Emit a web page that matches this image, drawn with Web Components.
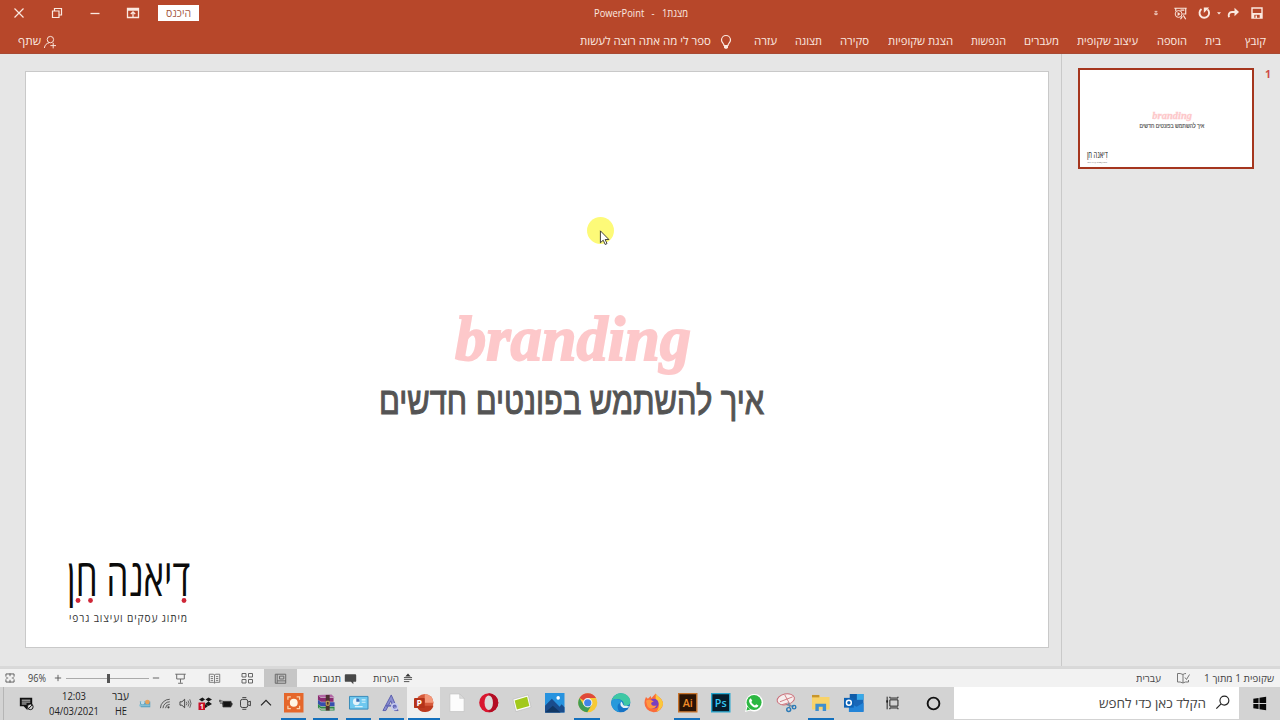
<!DOCTYPE html>
<html lang="he">
<head>
<meta charset="utf-8">
<title>מצגת1 - PowerPoint</title>
<style>
  body {
    margin: 0;
    width: 1280px;
    height: 720px;
    overflow: hidden;
    display: flex;
    flex-direction: column;
    background: #e6e6e6;
    font-family: "Open Sans", "Liberation Sans", sans-serif;
  }
</style>
</head>
<body>
<app-header></app-header>
<work-area></work-area>
<status-bar></status-bar>
<task-bar></task-bar>

<script>
const ICONS = {
  close: '<path d="M5.5 5.5l9 9M14.5 5.5l-9 9" stroke="currentColor" stroke-width="1.2"/>',
  restore: '<path d="M5.5 8h6.500v6.500h-6.500zM7.500 8v-2.500h7v6.500h-2.500" stroke="currentColor" stroke-width="1.2" fill="none"/>',
  minimize: '<path d="M5.500 10.500h9" stroke="currentColor" stroke-width="1.3"/>',
  ribbon: '<path d="M4.500 5.500h11v9h-11zM4.500 7h11M10 14V9M7.800 11l2.200-2.200 2.200 2.200" stroke="currentColor" stroke-width="1.3" fill="none"/>',
  caret: '<path d="M7.500 9h5L10 11.800z" fill="currentColor"/>',
  more: '<path d="M8.300 8h3.400M8.600 10h2.800v2h-2.800z" stroke="currentColor" fill="none"/>',
  save: '<path d="M5 5h10v10H5z" stroke="currentColor" stroke-width="1.4" fill="none"/><path d="M5 10h10v5H5z" fill="currentColor"/><path d="M7.300 11.800h5.400v3H7.300z" fill="#b7472a"/><path d="M8.500 12.500h1.500V15H8.500z" fill="currentColor"/>',
  redo: '<path d="M13 9H9c-2.600 0-4 2.200-3 5.200" stroke="currentColor" stroke-width="1.900" fill="none"/><path d="M11.500 4.800l4.500 4.200-4.500 4.200z" fill="currentColor"/>',
  undo: '<path d="M7.500 6.100a4.800 4.800 0 1 0 6 .3" stroke="currentColor" stroke-width="1.900" fill="none"/><path d="M15.200 4.600H9.800V10z" fill="currentColor"/>',
  present: '<path d="M3.500 4.500h13M5 4.500v3M15.500 4.500v6H12M12 13l-2 3M13 12l2.500 4M10 6.500h4" stroke="currentColor" stroke-width="1.200" fill="none"/><circle cx="8" cy="10.500" r="3.600" stroke="currentColor" fill="none"/><path d="M7 8.500v4l3-2z" fill="currentColor"/>',
  person: '<circle cx="10.500" cy="7" r="4" stroke="currentColor" stroke-width="1.200" fill="none"/><path d="M3 17.500c.5-4 3-6 6-6.500M14 11v7M10.500 14.500h7" stroke="currentColor" stroke-width="1.200" fill="none"/>',
  bulb: '<path d="M8 13.500c0-2-2.500-2.700-2.500-5.500a4.500 4.500 0 0 1 9 0c0 2.800-2.500 3.500-2.500 5.500z" stroke="currentColor" stroke-width="1.200" fill="none"/><path d="M8 13.500h4v2l-1 1.200H9l-1-1.200z" fill="currentColor"/>',
  fit: '<path d="M5.500 8.500v-3h9v3M5.500 11.500v3h9v-3M10 5v3M10 12v3M5.500 10H8M12 10h2.500" stroke="#555" fill="none"/>',
  plus: '<path d="M6.500 10h7M10 6.500v7" stroke="#555"/>',
  minus: '<path d="M6.500 10h7" stroke="#555"/>',
  show: '<path d="M4.500 5.500h11M6 5.500v5h8v-5M10 10.500v4M7.500 15h5" stroke="#666" fill="none"/>',
  read: '<path d="M4.500 5.500h4.500l1 1 1-1h4.500v8.500H11l-1 1-1-1H4.500zM10 6v9M6 8h2.500M6 10h2.500M6 12h2.500M11.500 8H14M11.500 10H14M11.500 12H14" stroke="#777" fill="none"/>',
  sorter: '<path d="M5 5.500h4v3.500H5zM11.500 5.500h4v3.500h-4zM5 11.500h4V15H5zM11.500 11.500h4V15h-4z" stroke="#666" fill="none"/>',
  normal: '<path d="M4.500 5.500h11v9.500h-11zM6.500 5.500v9.500M9 7.500h4.500v3H9zM6.500 12.500h9" stroke="#666" fill="none"/>',
  comment: '<path d="M5 5.500h10q1 0 1 1v6q0 1-1 1h-2V16l-2.500-2.500H5q-1 0-1-1v-6q0-1 1-1z" fill="#484848"/>',
  notes: '<path d="M10 5l3 3.200H7z" fill="#333"/><path d="M5.500 9.500h9M5.500 11.500h9M5.500 14h6" stroke="#444"/>',
  proof: '<path d="M10 6.500v8.500M10 6.500Q7 5 4.500 5.500v8.500Q7 13.500 10 15q2-1.500 5.500-1v-2M10 6.500q1-1 3-1M12 9.500l1.500 2 3-5" stroke="#777" fill="none"/>',
  notify: '<path d="M3 4h13v9h-5v4l-4-4H3z" fill="#111"/><path d="M5 6.500h9M5 8.500h9M5 10.500h5" stroke="#ddd"/><circle cx="14" cy="13.500" r="3" fill="#d3d3d3" stroke="#111"/><path d="M12 15.500l4-4" stroke="#111"/>',
  weather: '<path d="M4 8h11v6H5z" fill="#4f9bbd"/><circle cx="7" cy="9" r="2" fill="#c3dbe4"/><circle cx="12" cy="8.500" r="2.500" fill="#e5a25d"/><path d="M3.500 12h11" stroke="#85bed3" stroke-width="2"/>',
  wifi: '<path d="M4 15.500A11 11 0 0 1 15 5M7 15.500A8 8 0 0 1 15 8M10 15.500A5 5 0 0 1 15 11" stroke="#444" fill="none"/><circle cx="13.500" cy="14.500" r="1.300" fill="#444"/>',
  volume: '<path d="M3.500 8h2.300L9 5v10l-3.200-3H3.500z" stroke="#333" fill="none"/><path d="M11 8q1.300 2 0 4M13 6.500q2.300 3.500 0 7M15 5q3 5 0 10" stroke="#555" fill="none"/>',
  dropbox: '<path d="M4 6.500l3.500-2L10 6.500l-3 2zM10.500 6.500l3-2 3.500 2-3.500 2zM10 11l3.500-2.500L17 11l-3.500 2zM8 13l2.500-1.500L13 13l-2.500 2z" fill="#181818"/><path d="M3.500 9.500h6.500V17H3.500z" fill="#c90f25"/><text x="6.800" y="15.700" text-anchor="middle" font-family="Open Sans" font-size="6.500" font-weight="700" fill="#fff">1</text>',
  battery: '<path d="M7 7.500h9.500v6.500H7zM16.500 9.500h1.200v2.500h-1.200z" fill="#151515" stroke="#333"/><path d="M2.500 7h4M3.500 5.500v3M3.500 9.500h3l1 3" stroke="#333" fill="none"/>',
  camera: '<rect x="5" y="6" width="8" height="9" rx="2" stroke="#333" fill="none"/><path d="M13 9l3-1v5l-3-1M7 4h4.500M7 17h4.500" stroke="#333" fill="none"/>',
  up: '<path d="M5 12.300l5-5 5 5" stroke="#222" stroke-width="1.200" fill="none"/>',
  record: '<path d="M0 0h20v20H0z" fill="#e5672b"/><path d="M4 7V4h3M13 4h3v3M16 13v3h-3M7 16H4v-3" stroke="#fbd2ad" stroke-width="1.300" fill="none"/><circle cx="10" cy="10" r="4" fill="#fff6e4"/>',
  winrar: '<path d="M2 2l14-.5 3 3H5z" fill="#b267a5"/><path d="M2 2l3 3h13v4H5L2 7z" fill="#8b2a70"/><path d="M2 7l3 2.500h14v4H5L2 11z" fill="#364eae"/><path d="M2 11l3 3h14v4H5l-3-3z" fill="#2b8b48"/><path d="M3 15l2 1.500h13" stroke="#e9d9d7" fill="none"/><path d="M10 2h4v16h-4z" fill="#4d3030"/><path d="M10.500 8.500h3v4h-3z" stroke="#d6b45a" fill="none"/>',
  panel: '<path d="M.5 3.500h19v13H.500z" fill="#6fc8ef" stroke="#398bb9"/><circle cx="7.500" cy="9" r="3.500" fill="#e5f3fa"/><path d="M7.500 9V5.500A3.500 3.500 0 0 1 11 9z" fill="#3a6fb5"/><path d="M13 7h4M13 9.500h4M6 14h8" stroke="#d5f1fb" stroke-width="1.200"/>',
  fontapp: '<path d="M2 18L10.500 2l7 16h-3.500l-4-10-5 10z" fill="#8a8ed1" stroke="#5b60ae"/><path d="M5 13h11" stroke="#6469b7" stroke-width="2"/><circle cx="14" cy="14" r="3" stroke="#c5cbef" fill="none" stroke-width="1.600"/>',
  ppt: '<circle cx="11" cy="10" r="9" fill="#d65b3c"/><path d="M11 1a9 9 0 0 1 9 9h-9z" fill="#f4997b"/><path d="M2.500 13H20a9 9 0 0 1-17 1z" fill="#bd3b20"/><rect x="0" y="5" width="11" height="10.500" rx="1" fill="#b53319"/><text x="5.500" y="13.500" text-anchor="middle" font-family="Open Sans" font-size="9" font-weight="700" fill="#fff">P</text>',
  file: '<path d="M3 1h10l4.500 4.500V19H3z" fill="#fcfcfc" stroke="#c4c4c4" stroke-width=".700"/><path d="M13 1v4.500h4.500z" fill="#ddd" stroke="#bbb" stroke-width=".500"/>',
  opera: '<circle cx="10" cy="10" r="9.800" fill="#d9162f"/><path d="M10 .2a9.800 9.800 0 0 1 0 19.600z" fill="#b30d24"/><ellipse cx="10" cy="10" rx="4.300" ry="7.500" fill="#dadada"/>',
  card: '<path d="M1 6.500L16.500 2l3 12.500L4 19z" fill="#fff" stroke="#aaa" stroke-width=".500"/><path d="M2.700 7.800l12.800-4 2.300 9.500L5 17z" fill="#a2c91b"/>',
  photos: '<path d="M0 0h20v20H0z" fill="#2793df"/><path d="M0 13l7-7 8 8 2-2.500 3 3V20H0z" fill="#1a4c8c"/><path d="M0 20l8-7 8 7z" fill="#113764"/><circle cx="13.500" cy="5" r="1.800" fill="#fff"/>',
  chrome: '<circle cx="10" cy="10" r="9.800" fill="#f7c934"/><path d="M10 10L1.500 5.100A9.800 9.800 0 0 1 18.500 5.200H10z" fill="#df493b"/><path d="M1.500 5.100A9.800 9.800 0 0 0 9.500 19.800l4.500-7.500-8.200 0z" fill="#3f9d55"/><circle cx="10" cy="10" r="4.800" fill="#f4f4f4"/><circle cx="10" cy="10" r="3.700" fill="#4285e8"/>',
  edge: '<circle cx="10" cy="10" r="9.800" fill="#1573c6"/><path d="M.5 8C3 1 8 0 11 .300c5 .300 9 4.200 8.800 8.700-.200 3.500-3 5-7 3.500 2-5-7-9-12.300-4.500z" fill="#3fc8a4"/><path d="M.5 8c5-4.500 13-.5 11 4-3-4-7 1-3 7.500C2 18.500-.5 13 .500 8z" fill="#2799db"/><path d="M11 9c-3 2-.5 6.500 3 6.500 2 0 4-1 5-1.500l-3-1c-2 .5-4-.5-4-2z" fill="#e6f1f5"/>',
  firefox: '<path d="M2 4l2 2 3-3 .5 2.500L12 .5c1 3 7 4.500 7.500 10A9.500 9.500 0 0 1 .500 10C.500 8 1 6 2 4z" fill="#fa6c3b"/><path d="M12 .5c1 3 7 4.500 7.500 10-.3 4-3 7-6.500 8.500 4-5 2-10-1-12.500z" fill="#fbc83b"/><circle cx="10" cy="11" r="5" fill="#7a3fbf"/><path d="M2 8c3-2 6-1 8 1-2 0-3 1-2.500 2.500 1 2 4 2 5.500 1-1 3.500-7 5-9.500 1z" fill="#ff9640"/>',
  ai: '<path d="M.7.7h18.600v18.600H.7z" fill="#2a1304" stroke="#c8742c" stroke-width="1.400"/><text x="10" y="14" text-anchor="middle" font-family="Open Sans" font-size="11" font-weight="600" fill="#ee8b28">Ai</text>',
  ps: '<path d="M.7.7h18.600v18.600H.7z" fill="#061c2b" stroke="#27a7d0" stroke-width="1.400"/><text x="10" y="14" text-anchor="middle" font-family="Open Sans" font-size="11" font-weight="600" fill="#35c6f4">Ps</text>',
  whatsapp: '<path d="M1 19.500L2.500 14A9 9 0 1 1 6.500 18z" fill="#fff"/><circle cx="10.300" cy="9.800" r="7.700" fill="#2cb742"/><path d="M2.500 18l1-4 3 3z" fill="#2cb742"/><path d="M7 5.500l1.500 2.500-1 1.300c.8 1.700 2 2.700 3.700 3.400l1.300-1.200 2.300 1.300c-1 3-4 2.500-6.500.5-3-2.500-4.500-6-1.300-7.800z" fill="#fff"/>',
  snip: '<ellipse cx="9" cy="6.500" rx="9" ry="5.500" fill="#f6eeee" stroke="#c96b76" transform="rotate(-12 9 6.500)"/><path d="M3 9l13-5M8 2l6 11M5 12l7-2" stroke="#d07b82" fill="none"/><path d="M12 10l1 5M10 12l7 2" stroke="#6d8aa1" stroke-width="1.300"/><circle cx="12" cy="17" r="2" stroke="#2c7bb7" stroke-width="1.500" fill="none"/><circle cx="17.500" cy="14.500" r="1.800" stroke="#2c7bb7" stroke-width="1.500" fill="none"/>',
  explorer: '<path d="M1 2h7.500l1 2H19v13H1z" fill="#f8d36a"/><path d="M1 2h7.500v2.500H1z" fill="#c8962d"/><path d="M4.500 18.500V11h11v7.500H12V14H8v4.500z" fill="#3f8fce"/>',
  outlook: '<path d="M6 1h14v18H6z" fill="#1867b8"/><path d="M13 1h7v6h-7z" fill="#37a9e8"/><path d="M6 1h7v6H6z" fill="#0f5ca8"/><path d="M5 10l8 4 7-4v9.500H5z" fill="#2384d8"/><path d="M0 5h10v10H0z" fill="#0d62b5"/><circle cx="5" cy="10" r="2.500" stroke="#fff" stroke-width="1.500" fill="none"/>',
  taskview: '<path d="M6.500 6.500h9v7h-9zM6.500 3v1.500h9V3M6.500 17v-1.500h9V17M3.500 3v14" stroke="#222" fill="none" stroke-width="1.100"/><path d="M2.500 7h2v2.500h-2z" fill="#222"/>',
  cortana: '<circle cx="10" cy="10" r="5.600" stroke="#111" stroke-width="1.800" fill="none"/>',
  search: '<circle cx="12" cy="8" r="4.700" stroke="#222" stroke-width="1.200" fill="none"/><path d="M8.500 11.500L3.500 16.500" stroke="#222" stroke-width="1.300"/>',
  windows: '<path d="M3.500 5l5.500-.8v5.300H3.500zM10 4l7-1v6.500h-7zM3.500 10.500H9v5.300L3.500 15zM10 10.500h7V17l-7-1z" fill="#080808"/>',
  cursor: '<path d="M4 1v14l3.300-3 2.300 5 2.200-1-2.200-4.800H14z" fill="#fff" stroke="#222" stroke-width="1"/>'
};

class UiIcon extends HTMLElement {
  constructor() {
    super();
    this.attachShadow({ mode: 'open' });
  }

  connectedCallback() {
    const size = this.getAttribute('size') || 20;
    this.shadowRoot.innerHTML = `
      <style>
        :host { display: block; flex: none; width: ${size}px; height: ${size}px; }
        svg { display: block; overflow: visible; }
      </style>
      <svg width="${size}" height="${size}" viewBox="0 0 20 20">${ICONS[this.getAttribute('name')]}</svg>
    `;
  }
}

// Centres its content in a box of fixed width, optionally with a "running" bar below
class BarSlot extends HTMLElement {
  constructor() {
    super();
    this.attachShadow({ mode: 'open' });
  }

  connectedCallback() {
    const bar = this.getAttribute('bar');
    this.shadowRoot.innerHTML = `
      <style>
        :host {
          display: flex;
          flex-direction: column;
          align-items: center;
          flex: none;
          box-sizing: border-box;
          height: 100%;
          width: ${this.getAttribute('w')}px;
        }
        .content { flex: 1; min-height: 0; display: flex; align-items: center; }
        .bar { flex: none; width: ${bar}px; height: 2px; background: #1470bd; }
        :host(:not([bar])) { padding-bottom: var(--slot-bottom, 0px); }
      </style>
      <div class="content"><slot></slot></div>
      ${bar ? '<div class="bar"></div>' : ''}
    `;
  }
}

// One line of text stretched to an exact width
class FitText extends HTMLElement {
  constructor() {
    super();
    this.attachShadow({ mode: 'open' });
  }

  connectedCallback() {
    const w = this.getAttribute('w');
    const size = this.getAttribute('size') || 11;
    const sy = this.getAttribute('sy') || 1;
    this.shadowRoot.innerHTML = `
      <style>
        :host { display: block; flex: none; direction: ltr; text-align: left; width: ${w}px; font-size: ${size}px; line-height: 1.3; }
        span { display: inline-block; vertical-align: top; white-space: pre; transform-origin: 0 50%; }
      </style>
      <span dir="${this.hasAttribute('ltr') ? 'ltr' : 'rtl'}"><slot></slot></span>
    `;
    const $span = this.shadowRoot.querySelector('span');
    const natural = parseFloat(getComputedStyle($span).width);
    $span.style.transform = `scale(${w / natural}, ${sy})`;
  }
}

class AppHeader extends HTMLElement {
  constructor() {
    super();
    this.attachShadow({ mode: 'open' }).innerHTML = `
      <style>
        :host { display: block; height: 54px; background: #b7472a; color: #fbe9e0; flex: none; box-sizing: border-box; border-bottom: 1px solid #a84a33; }
        .row { display: flex; align-items: center; height: 26px; }
        .tabs { height: 27px; padding-top: 2px; box-sizing: content-box; direction: rtl; padding-right: 14px; }
        .tabs > fit-text { margin-left: 18.3px; }
        .signin { background: #fff; color: #a4573f; width: 41px; height: 16px; display: grid; place-items: center; margin-left: 6px; }
        .title { margin-left: 395px; }
        .qat { display: flex; align-items: center; margin-left: auto; height: 100%; padding-right: 10px; }
        .share { margin-right: auto; display: flex; align-items: center; gap: 1px; padding-left: 18px; }
      </style>
      <div class="row">
        <bar-slot w="38"><ui-icon name="close"></ui-icon></bar-slot>
        <bar-slot w="38"><ui-icon name="restore"></ui-icon></bar-slot>
        <bar-slot w="38"><ui-icon name="minimize"></ui-icon></bar-slot>
        <bar-slot w="38"><ui-icon name="ribbon"></ui-icon></bar-slot>
        <div class="signin"><fit-text w="25">היכנס</fit-text></div>
        <fit-text class="title" w="94">מצגת1   -   PowerPoint</fit-text>
        <div class="qat">
          <bar-slot w="22"><ui-icon name="more" size="16"></ui-icon></bar-slot>
          <bar-slot w="26"><ui-icon name="present" size="19"></ui-icon></bar-slot>
          <bar-slot w="22"><ui-icon name="undo"></ui-icon></bar-slot>
          <bar-slot w="8"><ui-icon name="caret" size="16"></ui-icon></bar-slot>
          <bar-slot w="20"><ui-icon name="redo"></ui-icon></bar-slot>
          <bar-slot w="27"><ui-icon name="save"></ui-icon></bar-slot>
        </div>
      </div>
      <div class="row tabs">
        <fit-text w="21" style="margin-left:24px">קובץ</fit-text>
        <fit-text w="16">בית</fit-text>
        <fit-text w="30">הוספה</fit-text>
        <fit-text w="61">עיצוב שקופית</fit-text>
        <fit-text w="35">מעברים</fit-text>
        <fit-text w="35">הנפשות</fit-text>
        <fit-text w="65">הצגת שקופיות</fit-text>
        <fit-text w="29">סקירה</fit-text>
        <fit-text w="27">תצוגה</fit-text>
        <fit-text w="23">עזרה</fit-text>
        <ui-icon name="bulb" style="margin-right:-1px"></ui-icon>
        <fit-text w="131" style="margin:0 5px 0 0">ספר לי מה אתה רוצה לעשות</fit-text>
        <div class="share"><ui-icon name="person" size="16"></ui-icon><fit-text w="23">שתף</fit-text></div>
      </div>
    `;
  }
}

class SlideCanvas extends HTMLElement {
  constructor() {
    super();
    this.attachShadow({ mode: 'open' }).innerHTML = `
      <style>
        :host { display: flex; flex-direction: column; width: 1022px; height: 575px; background: #fff; box-sizing: border-box; }
        .brand { margin: 225px 0 0 429px; color: #fdc8ca; font-family: "Liberation Serif", serif; font-style: italic; font-weight: 700; -webkit-text-stroke: 1.800px #fdc8ca; }
        .head { margin: -4px 0 0 353px; color: #545454; font-family: "Liberation Sans", sans-serif; -webkit-text-stroke: 1.100px #545454; }
        .logo { margin: auto 0 21px 41px; width: 123px; display: flex; flex-direction: column; }
        .name { color: #0b0b0b; font-family: "Open Sans", "Liberation Sans", sans-serif; font-weight: 400; }
        .dots { height: 5px; margin-top: -11px; display: block; }
        .sub { color: #333; margin: 8px 0 0 2px; letter-spacing: 1px; font-family: "Open Sans", "Liberation Sans", sans-serif; }
      </style>
      <fit-text class="brand" ltr w="236" size="64">branding</fit-text>
      <fit-text class="head" w="385" size="39">איך להשתמש בפונטים חדשים</fit-text>
      <div class="logo">
        <fit-text class="name" w="123" size="50" sy="1.03">דיאנה חן</fit-text>
        <svg class="dots" width="123" height="5"><g fill="#cf2637"><circle cx="11" cy="2.500" r="2.400"/><circle cx="23.500" cy="2.500" r="2.400"/><circle cx="117" cy="2.500" r="2.400"/></g></svg>
        <fit-text class="sub" w="119" size="11.500">מיתוג עסקים ועיצוב גרפי</fit-text>
      </div>
    `;
  }
}

class WorkArea extends HTMLElement {
  constructor() {
    super();
    this.attachShadow({ mode: 'open' }).innerHTML = `
      <style>
        :host { display: flex; height: 614px; flex: none; background: #e6e6e6; box-sizing: border-box; border-bottom: 2px solid #d9d9d9; }
        .stage { width: 1062px; box-sizing: border-box; padding: 17px 0 0 25px; border-right: 1px solid #c9c9c9; position: relative; }
        .stage > slide-canvas { outline: 1px solid #c9c9c9; margin: 1px; }
        .pointer { position: absolute; left: 587px; top: 163px; width: 27px; height: 27px; border-radius: 50%; background: #fdfa78; }
        .pointer ui-icon { position: absolute; left: 10px; top: 13px; }
        .thumbs { display: flex; align-items: flex-start; padding: 14px 0 0 16px; gap: 11px; }
        .frame { width: 172px; height: 97px; border: 2px solid #a5361e; overflow: hidden; }
        .frame slide-canvas { transform: scale(.1685); transform-origin: 0 0; }
        .num { color: #cf4c46; font-weight: 700; margin-top: -1px; }
      </style>
      <div class="stage">
        <slide-canvas></slide-canvas>
        <div class="pointer"><ui-icon name="cursor" size="17"></ui-icon></div>
      </div>
      <div class="thumbs">
        <div class="frame"><slide-canvas></slide-canvas></div>
        <fit-text class="num" w="6" size="11">1</fit-text>
      </div>
    `;
  }
}

class StatusBar extends HTMLElement {
  constructor() {
    super();
    this.attachShadow({ mode: 'open' }).innerHTML = `
      <style>
        :host { display: flex; align-items: center; height: 19px; flex: none; box-sizing: border-box; background: #f2f2f2; color: #444; border-top: 1px solid #d8d8d8; }
        .track { width: 83px; height: 1px; background: #aaa; display: flex; align-items: center; box-sizing: border-box; padding-left: 41px; }
        .thumb { width: 3px; height: 9px; flex: none; background: #555; }
        .active { background: #c6c6c6; }
      </style>
      <bar-slot w="19"><ui-icon name="fit" size="18"></ui-icon></bar-slot>
      <fit-text w="18" size="10" ltr style="margin-left:9px">96%</fit-text>
      <bar-slot w="16" style="margin:0 0 0 4px"><ui-icon name="plus" size="18"></ui-icon></bar-slot>
      <div class="track"><div class="thumb"></div></div>
      <bar-slot w="13"><ui-icon name="minus" size="18"></ui-icon></bar-slot>
      <bar-slot w="36"><ui-icon name="show" size="19"></ui-icon></bar-slot>
      <bar-slot w="32"><ui-icon name="read" size="19"></ui-icon></bar-slot>
      <bar-slot w="34"><ui-icon name="sorter" size="20"></ui-icon></bar-slot>
      <bar-slot w="33" class="active"><ui-icon name="normal" size="19"></ui-icon></bar-slot>
      <fit-text w="28" size="10" style="margin-left:16px">תגובות</fit-text>
      <bar-slot w="18"><ui-icon name="comment" size="19"></ui-icon></bar-slot>
      <fit-text w="26" size="10" style="margin-left:14px">הערות</fit-text>
      <bar-slot w="17"><ui-icon name="notes" size="18"></ui-icon></bar-slot>
      <fit-text w="25" size="10" style="margin-left:auto">עברית</fit-text>
      <bar-slot w="43"><ui-icon name="proof" size="20"></ui-icon></bar-slot>
      <fit-text w="70" size="10" style="margin-right:6px">שקופית 1 מתוך 1</fit-text>
    `;
  }
}

// icon, slot width, width of the running bar
const APPS = [
  ['record', 32.6, 25], ['winrar', 32.6, 25], ['panel', 32.6, 25], ['fontapp', 32.6, 25],
  ['ppt', 32.7, 32], ['file', 32.7], ['opera', 32.7], ['card', 32.7], ['photos', 32.7],
  ['chrome', 33.3, 26], ['edge', 33.3], ['firefox', 33.3], ['ai', 33.3, 26], ['ps', 33.3],
  ['whatsapp', 33.3], ['snip', 33.3], ['explorer', 33.3, 26], ['outlook', 33.3]
];

class TaskBar extends HTMLElement {
  constructor() {
    super();
    const apps = APPS.map(([name, w, bar]) => `
      <bar-slot w="${w}" ${bar ? `bar="${bar}"` : ''} class="app-${name}"><ui-icon name="${name}" size="19.5"></ui-icon></bar-slot>`).join('');
    this.attachShadow({ mode: 'open' }).innerHTML = `
      <style>
        :host { display: flex; align-items: center; height: 33px; flex: none; background: #d3d3d3; color: #222; }
        bar-slot { --slot-bottom: 1px; }
        .edge { width: 3px; height: 33px; border-right: 1px solid #b5b5b5; }
        .clock, .lang { display: flex; flex-direction: column; align-items: center; }
        .app-ppt { background: #efefef; }
        .search { display: flex; align-items: center; justify-content: flex-end; height: 32px; align-self: flex-start; width: 285px; background: #fff; color: #444; margin-left: auto; }
      </style>
      <div class="edge"></div>
      <bar-slot w="45"><ui-icon name="notify" size="19"></ui-icon></bar-slot>
      <div class="clock"><fit-text w="24" size="11.500" ltr>12:03</fit-text><fit-text w="50" size="11.500" ltr>04/03/2021</fit-text></div>
      <div class="lang" style="margin:0 6px 0 13px"><fit-text w="17" size="11.500">עבר</fit-text><fit-text w="12" size="11.500" ltr>HE</fit-text></div>
      <bar-slot w="20"><ui-icon name="weather" size="19"></ui-icon></bar-slot>
      <bar-slot w="20"><ui-icon name="wifi" size="17"></ui-icon></bar-slot>
      <bar-slot w="20"><ui-icon name="volume" size="17"></ui-icon></bar-slot>
      <bar-slot w="20"><ui-icon name="dropbox" size="20"></ui-icon></bar-slot>
      <bar-slot w="20"><ui-icon name="battery" size="17"></ui-icon></bar-slot>
      <bar-slot w="20"><ui-icon name="camera" size="18"></ui-icon></bar-slot>
      <bar-slot w="22"><ui-icon name="up"></ui-icon></bar-slot>
      ${apps}
      <bar-slot w="46"><ui-icon name="taskview" size="18"></ui-icon></bar-slot>
      <bar-slot w="34"><ui-icon name="cortana" size="21"></ui-icon></bar-slot>
      <div class="search">
        <fit-text w="107" size="13">הקלד כאן כדי לחפש</fit-text>
        <bar-slot w="33"><ui-icon name="search" size="19"></ui-icon></bar-slot>
      </div>
      <bar-slot w="41"><ui-icon name="windows" size="19"></ui-icon></bar-slot>
    `;
  }
}

customElements.define('app-header', AppHeader);
customElements.define('work-area', WorkArea);
customElements.define('slide-canvas', SlideCanvas);
customElements.define('status-bar', StatusBar);
customElements.define('task-bar', TaskBar);
customElements.define('ui-icon', UiIcon);
customElements.define('bar-slot', BarSlot);
customElements.define('fit-text', FitText);
</script>
</body>
</html>
